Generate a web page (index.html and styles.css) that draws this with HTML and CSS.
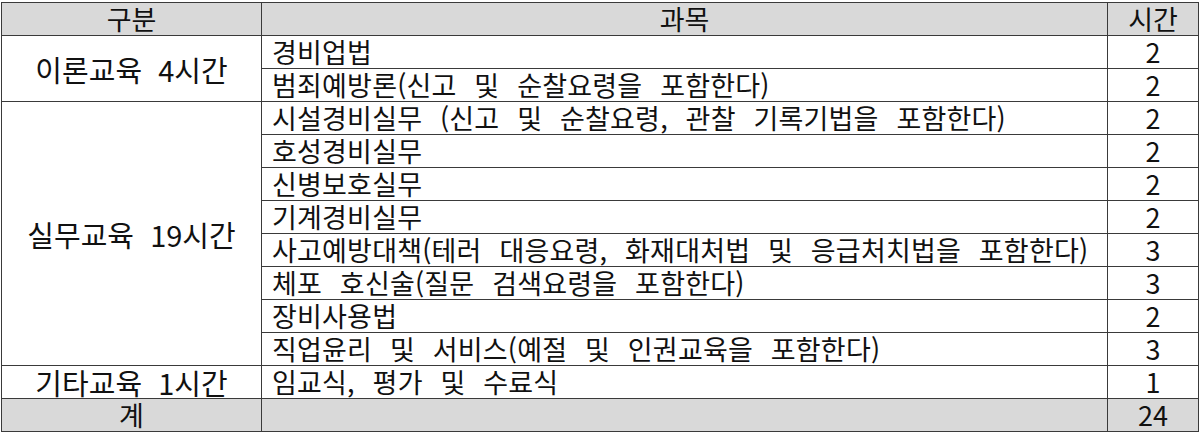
FILE: index.html
```html
<!DOCTYPE html>
<html lang="ko">
<head>
<meta charset="utf-8">
<title>교육과목</title>
<link rel="stylesheet" href="styles.css">
</head>
<body>
<table class="course-table">
  <colgroup>
    <col class="col-cat">
    <col class="col-subj">
    <col class="col-hours">
  </colgroup>
  <thead>
    <tr class="row-head">
      <th>구분</th>
      <th>과목</th>
      <th>시간</th>
    </tr>
  </thead>
  <tbody>
    <tr>
      <td class="cat" rowspan="2">이론교육 4시간</td>
      <td class="subj">경비업법</td>
      <td class="hours">2</td>
    </tr>
    <tr>
      <td class="subj">범죄예방론(신고 및 순찰요령을 포함한다)</td>
      <td class="hours">2</td>
    </tr>
    <tr>
      <td class="cat" rowspan="8">실무교육 19시간</td>
      <td class="subj">시설경비실무 (신고 및 순찰요령, 관찰 기록기법을 포함한다)</td>
      <td class="hours">2</td>
    </tr>
    <tr>
      <td class="subj">호성경비실무</td>
      <td class="hours">2</td>
    </tr>
    <tr>
      <td class="subj">신병보호실무</td>
      <td class="hours">2</td>
    </tr>
    <tr>
      <td class="subj">기계경비실무</td>
      <td class="hours">2</td>
    </tr>
    <tr>
      <td class="subj">사고예방대책(테러 대응요령, 화재대처법 및 응급처치법을 포함한다)</td>
      <td class="hours">3</td>
    </tr>
    <tr>
      <td class="subj">체포 호신술(질문 검색요령을 포함한다)</td>
      <td class="hours">3</td>
    </tr>
    <tr>
      <td class="subj">장비사용법</td>
      <td class="hours">2</td>
    </tr>
    <tr>
      <td class="subj">직업윤리 및 서비스(예절 및 인권교육을 포함한다)</td>
      <td class="hours">3</td>
    </tr>
    <tr>
      <td class="cat">기타교육 1시간</td>
      <td class="subj">임교식, 평가 및 수료식</td>
      <td class="hours">1</td>
    </tr>
  </tbody>
  <tfoot>
    <tr class="row-total">
      <td class="total-label">계</td>
      <td class="subj"></td>
      <td class="hours">24</td>
    </tr>
  </tfoot>
</table>
</body>
</html>
```

FILE: styles.css
```css
html, body {
  margin: 0;
  padding: 0;
  background: #ffffff;
}

body {
  padding: 2px 0 0 1px;
  font-family: "Noto Sans CJK KR", "Noto Sans", sans-serif;
  color: #111111;
}

.course-table {
  border-collapse: collapse;
  table-layout: fixed;
  width: 1197px;
  font-size: 27px;
  line-height: 28px;
}

.col-cat { width: 260px; }
.col-subj { width: 846px; }
.col-hours { width: 91px; }

.course-table th,
.course-table td {
  border: 1px solid #3a3a3a;
  height: 32px;
  padding: 0;
  vertical-align: middle;
  white-space: nowrap;
  font-weight: 400;
}

.row-head th,
.row-total td {
  background: #d9d9d9;
  text-align: center;
}

.cat {
  text-align: center;
  font-size: 29px;
  word-spacing: 8px;
}

.total-label {
  text-align: center;
}

.subj {
  text-align: left;
  padding-left: 10px !important;
  word-spacing: 10px;
  letter-spacing: 0.2px;
}

.hours {
  text-align: center;
}
```
